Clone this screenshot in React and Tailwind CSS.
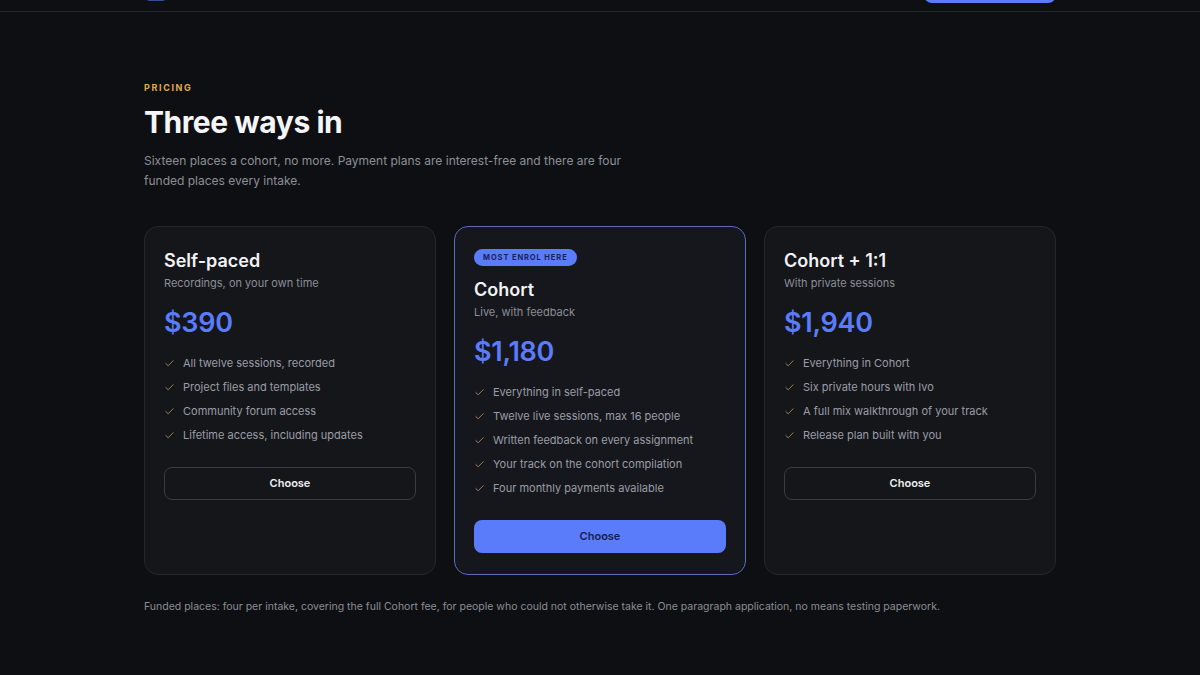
import { Check } from "lucide-react";

const plans = [
  {
    name: "Self-paced",
    sub: "Recordings, on your own time",
    price: "$390",
    features: [
      "All twelve sessions, recorded",
      "Project files and templates",
      "Community forum access",
      "Lifetime access, including updates",
    ],
  },
  {
    name: "Cohort",
    sub: "Live, with feedback",
    price: "$1,180",
    featured: true,
    features: [
      "Everything in self-paced",
      "Twelve live sessions, max 16 people",
      "Written feedback on every assignment",
      "Your track on the cohort compilation",
      "Four monthly payments available",
    ],
  },
  {
    name: "Cohort + 1:1",
    sub: "With private sessions",
    price: "$1,940",
    features: [
      "Everything in Cohort",
      "Six private hours with Ivo",
      "A full mix walkthrough of your track",
      "Release plan built with you",
    ],
  },
];

function PlanCard({ plan }) {
  return (
    <div
      className={`rounded-[14px] border px-[19px] pt-[22px] pb-[21px] ${
        plan.featured ? "border-[#5a6bc0] bg-[#16171c]" : "border-[#25272d] bg-[#15161a]"
      }`}
    >
      {plan.featured && (
        <div className="mb-3 flex h-[17px] w-fit items-center rounded-full bg-[#5b7cfa] px-[9px] text-[7.5px] leading-none font-bold tracking-[0.12em] text-[#1a2356]">
          MOST ENROL HERE
        </div>
      )}
      <h3 className="text-[18px] leading-6 font-semibold text-[#f1f2f5]">{plan.name}</h3>
      <p className="mt-0.5 text-[11px] leading-4 text-[#8b8e97]">{plan.sub}</p>
      <p className="mt-4 text-[27px] leading-8 font-semibold tracking-[-0.01em] text-[#5b7cfa]">
        {plan.price}
      </p>
      <ul className="mt-4 space-y-2">
        {plan.features.map((f) => (
          <li key={f} className="flex items-center gap-2 text-[11px] leading-4 text-[#9a9da6]">
            <Check size={11} strokeWidth={1.6} className="shrink-0 text-[#cda464]" />
            <span>{f}</span>
          </li>
        ))}
      </ul>
      <button
        className={`mt-6 flex h-[33px] w-full items-center justify-center rounded-lg text-[11px] font-semibold ${
          plan.featured
            ? "bg-[#5b7cfa] text-[#16204d]"
            : "border border-[#3a3c43] text-[#eef0f3]"
        }`}
      >
        Choose
      </button>
    </div>
  );
}

export default function App() {
  return (
    <div
      className="min-h-screen overflow-hidden bg-[#0e0f12]"
      style={{ fontFamily: "Inter, 'Liberation Sans', sans-serif" }}
    >
      <header className="-mt-[48px] h-[60px] border-b border-[#24262c]">
        <div className="mx-auto flex h-full w-[912px] items-end justify-between">
          <div className="mb-[10px] h-6 w-6 rounded-md bg-[#3a4a9a]" />
          <div className="mb-2 h-9 w-[132px] rounded-lg bg-[#5b7cfa]" />
        </div>
      </header>

      <section className="mx-auto w-[912px] pt-[70px] pb-16">
        <p className="text-[9px] leading-3 font-bold tracking-[0.18em] text-[#e3aa4c]">PRICING</p>
        <h1 className="mt-[10px] text-[30px] leading-9 font-bold tracking-[-0.015em] text-[#f4f5f8]">
          Three ways in
        </h1>
        <p className="mt-[11px] max-w-[490px] text-[12px] leading-5 text-[#8c8f98]">
          Sixteen places a cohort, no more. Payment plans are interest-free and there are four
          funded places every intake.
        </p>

        <div className="mt-[35px] grid grid-cols-3 gap-[18px]">
          {plans.map((p) => (
            <PlanCard key={p.name} plan={p} />
          ))}
        </div>

        <p className="mt-6 text-[10.5px] leading-4 text-[#8a8d96]">
          Funded places: four per intake, covering the full Cohort fee, for people who could not
          otherwise take it. One paragraph application, no means testing paperwork.
        </p>
      </section>
    </div>
  );
}
